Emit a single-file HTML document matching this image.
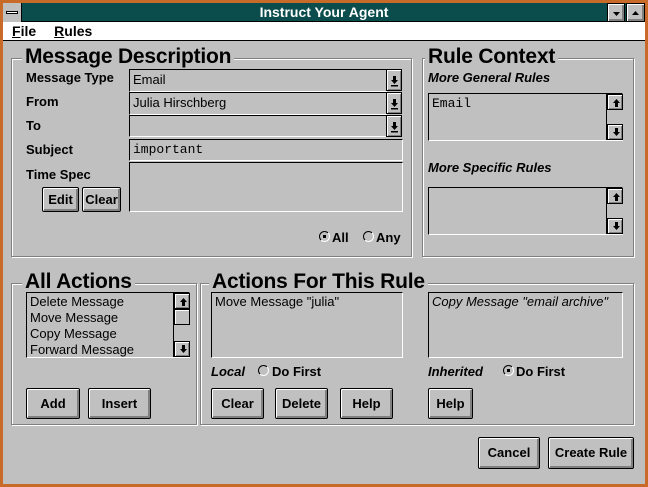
<!DOCTYPE html>
<html><head><style>
*{box-sizing:border-box;margin:0;padding:0}
body{width:648px;height:487px;background:#c0c0c0;font-family:"Liberation Sans",sans-serif;position:relative;overflow:hidden}
.a{position:absolute}
.frame{left:0;top:0;width:648px;height:487px;border:3px solid #c86a28;background:#c0c0c0}
.title{left:3px;top:3px;width:642px;height:19px;background:#0b4c4c;color:#fff;font-weight:bold;font-size:14px;text-align:center;line-height:19px;border-bottom:1px solid #000}
.menu{left:3px;top:22px;width:642px;height:19px;background:#fff;border-bottom:1px solid #000;font-size:14px;font-weight:bold;line-height:19px}
.grp{border:1px solid #808080;box-shadow:1px 1px 0 #fff, inset 1px 1px 0 #fff}
.gt{font-size:21px;font-weight:bold;background:#c0c0c0;padding:0 3px;line-height:22px;letter-spacing:-0.2px}
.lbl{font-size:13px;font-weight:bold}
.inp{border-top:1px solid #000;border-left:1px solid #000;border-bottom:1px solid #fff;border-right:1px solid #fff;font-size:13px;padding:2px 3px}
.btn{background:#c0c0c0;border:1px solid #000;box-shadow:inset 1px 1px 0 #fff, inset -2px -2px 0 #808080;font-size:13px;font-weight:bold;text-align:center;border-radius:2px}
.dd{width:16px;height:22px;background:#c0c0c0;border:1px solid #000;box-shadow:inset 1px 1px 0 #fff, inset -1px -1px 0 #808080}
.sb{width:17px;background:#c0c0c0;border-left:1px solid #000}
.sbb{width:16px;height:16px;border:1px solid #000;box-shadow:inset 1px 1px 0 #fff, inset -1px -1px 0 #808080;background:#c0c0c0}
.rad{width:11px;height:11px;border-radius:50%;border:1px solid #000;border-right-color:#fff;border-bottom-color:#fff;background:#c0c0c0}
.mono{font-family:"Liberation Mono",monospace}
svg{position:absolute;left:0;top:0}
</style></head><body>
<div class="a frame"></div>
<div class="a title">Instruct Your Agent</div>
<div class="a" style="left:3px;top:3px;width:19px;height:19px;background:#c0c0c0;border-right:1px solid #000"><div class="a" style="left:3px;top:8px;width:12px;height:3px;background:#fff;border:1px solid #000"></div></div>
<div class="a btn" style="left:607px;top:3px;width:18px;height:19px;border-radius:0"><svg width="18" height="19"><path d="M5 8h7l-3.5 4z" fill="#000"/></svg></div>
<div class="a btn" style="left:626px;top:3px;width:19px;height:19px;border-radius:0"><svg width="18" height="19"><path d="M5 11h7l-3.5-4z" fill="#000"/></svg></div>
<div class="a menu"><span style="margin-left:9px"><u>F</u>ile</span><span style="margin-left:18px"><u>R</u>ules</span></div>

<div class="a grp" style="left:11px;top:58px;width:401px;height:199px"></div>
<div class="a gt" style="left:22px;top:46px">Message Description</div>
<div class="a lbl" style="left:26px;top:70px">Message Type</div>
<div class="a lbl" style="left:26px;top:94px">From</div>
<div class="a lbl" style="left:26px;top:118px">To</div>
<div class="a lbl" style="left:26px;top:142px">Subject</div>
<div class="a lbl" style="left:26px;top:167px">Time Spec</div>
<div class="a inp" style="left:129px;top:69px;width:258px;height:23px">Email</div>
<div class="a dd" style="left:386px;top:69px"><svg width="16" height="22"><path d="M6 6h3v4h2l-3.5 4L4 10h2z" fill="#000"/><rect x="4" y="15" width="7" height="1.5" fill="#000"/></svg></div>
<div class="a inp" style="left:129px;top:92px;width:258px;height:23px">Julia Hirschberg</div>
<div class="a dd" style="left:386px;top:92px"><svg width="16" height="22"><path d="M6 6h3v4h2l-3.5 4L4 10h2z" fill="#000"/><rect x="4" y="15" width="7" height="1.5" fill="#000"/></svg></div>
<div class="a inp" style="left:129px;top:115px;width:258px;height:22px"></div>
<div class="a dd" style="left:386px;top:115px"><svg width="16" height="22"><path d="M6 6h3v4h2l-3.5 4L4 10h2z" fill="#000"/><rect x="4" y="15" width="7" height="1.5" fill="#000"/></svg></div>
<div class="a inp mono" style="left:129px;top:139px;width:274px;height:22px">important</div>
<div class="a inp" style="left:129px;top:162px;width:274px;height:50px"></div>
<div class="a btn" style="left:42px;top:187px;width:37px;height:25px;line-height:23px">Edit</div>
<div class="a btn" style="left:82px;top:187px;width:39px;height:25px;line-height:23px">Clear</div>
<div class="a rad" style="left:319px;top:231px"><div class="a" style="left:3px;top:3px;width:3px;height:3px;background:#000"></div></div>
<div class="a lbl" style="left:332px;top:230px">All</div>
<div class="a rad" style="left:363px;top:231px"></div>
<div class="a lbl" style="left:376px;top:230px">Any</div>

<div class="a grp" style="left:422px;top:58px;width:212px;height:199px"></div>
<div class="a gt" style="left:425px;top:46px">Rule Context</div>
<div class="a lbl" style="left:428px;top:70px;font-style:italic">More General Rules</div>
<div class="a inp mono" style="left:428px;top:93px;width:195px;height:48px">Email</div>
<div class="a sb" style="left:606px;top:94px;height:46px"><div class="a sbb" style="left:0;top:0"><svg width="16" height="16"><path d="M7 12h3V8h2L8.5 4 5 8h2z" fill="#000"/></svg></div><div class="a sbb" style="left:0;top:30px"><svg width="16" height="16"><path d="M7 3h3v4h2l-3.5 4L5 7h2z" fill="#000"/></svg></div></div>
<div class="a lbl" style="left:428px;top:160px;font-style:italic">More Specific Rules</div>
<div class="a inp" style="left:428px;top:187px;width:195px;height:48px"></div>
<div class="a sb" style="left:606px;top:188px;height:46px"><div class="a sbb" style="left:0;top:0"><svg width="16" height="16"><path d="M7 12h3V8h2L8.5 4 5 8h2z" fill="#000"/></svg></div><div class="a sbb" style="left:0;top:30px"><svg width="16" height="16"><path d="M7 3h3v4h2l-3.5 4L5 7h2z" fill="#000"/></svg></div></div>

<div class="a grp" style="left:11px;top:283px;width:186px;height:142px"></div>
<div class="a gt" style="left:22px;top:271px">All Actions</div>
<div class="a inp" style="left:26px;top:292px;width:164px;height:66px;padding:1px 3px;line-height:16px">Delete Message<br>Move Message<br>Copy Message<br>Forward Message</div>
<div class="a sb" style="left:173px;top:293px;height:64px"><div class="a sbb" style="left:0;top:0"><svg width="16" height="16"><path d="M7 12h3V8h2L8.5 4 5 8h2z" fill="#000"/></svg></div><div class="a" style="left:0;top:16px;width:16px;height:16px;border:1px solid #000;box-shadow:inset 1px 1px 0 #fff"></div><div class="a sbb" style="left:0;top:48px"><svg width="16" height="16"><path d="M7 3h3v4h2l-3.5 4L5 7h2z" fill="#000"/></svg></div></div>
<div class="a btn" style="left:26px;top:388px;width:54px;height:31px;line-height:29px">Add</div>
<div class="a btn" style="left:88px;top:388px;width:63px;height:31px;line-height:29px">Insert</div>

<div class="a grp" style="left:200px;top:283px;width:434px;height:142px"></div>
<div class="a gt" style="left:209px;top:271px">Actions For This Rule</div>
<div class="a inp" style="left:211px;top:292px;width:192px;height:66px;padding:1px 3px">Move Message "julia"</div>
<div class="a inp" style="left:428px;top:292px;width:195px;height:66px;padding:1px 3px;font-style:italic">Copy Message "email archive"</div>
<div class="a lbl" style="left:211px;top:364px;font-style:italic">Local</div>
<div class="a rad" style="left:258px;top:365px"></div>
<div class="a lbl" style="left:272px;top:364px">Do First</div>
<div class="a lbl" style="left:428px;top:364px;font-style:italic">Inherited</div>
<div class="a rad" style="left:503px;top:365px"><div class="a" style="left:3px;top:3px;width:3px;height:3px;background:#000"></div></div>
<div class="a lbl" style="left:516px;top:364px">Do First</div>
<div class="a btn" style="left:211px;top:388px;width:53px;height:31px;line-height:29px">Clear</div>
<div class="a btn" style="left:275px;top:388px;width:53px;height:31px;line-height:29px">Delete</div>
<div class="a btn" style="left:340px;top:388px;width:53px;height:31px;line-height:29px">Help</div>
<div class="a btn" style="left:428px;top:388px;width:45px;height:31px;line-height:29px">Help</div>

<div class="a btn" style="left:478px;top:437px;width:62px;height:32px;line-height:30px">Cancel</div>
<div class="a btn" style="left:548px;top:437px;width:86px;height:32px;line-height:30px">Create Rule</div>
</body></html>
